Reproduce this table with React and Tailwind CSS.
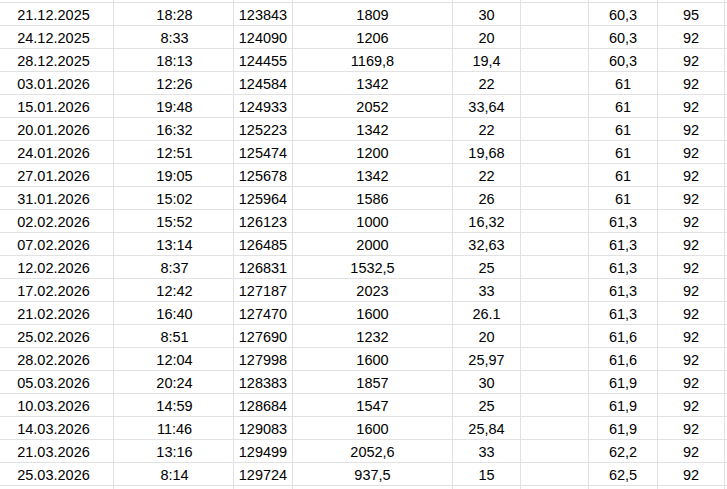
const rows = [
  ['21.12.2025', '18:28', '123843', '1809', '30', '', '60,3', '95'],
  ['24.12.2025', '8:33', '124090', '1206', '20', '', '60,3', '92'],
  ['28.12.2025', '18:13', '124455', '1169,8', '19,4', '', '60,3', '92'],
  ['03.01.2026', '12:26', '124584', '1342', '22', '', '61', '92'],
  ['15.01.2026', '19:48', '124933', '2052', '33,64', '', '61', '92'],
  ['20.01.2026', '16:32', '125223', '1342', '22', '', '61', '92'],
  ['24.01.2026', '12:51', '125474', '1200', '19,68', '', '61', '92'],
  ['27.01.2026', '19:05', '125678', '1342', '22', '', '61', '92'],
  ['31.01.2026', '15:02', '125964', '1586', '26', '', '61', '92'],
  ['02.02.2026', '15:52', '126123', '1000', '16,32', '', '61,3', '92'],
  ['07.02.2026', '13:14', '126485', '2000', '32,63', '', '61,3', '92'],
  ['12.02.2026', '8:37', '126831', '1532,5', '25', '', '61,3', '92'],
  ['17.02.2026', '12:42', '127187', '2023', '33', '', '61,3', '92'],
  ['21.02.2026', '16:40', '127470', '1600', '26.1', '', '61,3', '92'],
  ['25.02.2026', '8:51', '127690', '1232', '20', '', '61,6', '92'],
  ['28.02.2026', '12:04', '127998', '1600', '25,97', '', '61,6', '92'],
  ['05.03.2026', '20:24', '128383', '1857', '30', '', '61,9', '92'],
  ['10.03.2026', '14:59', '128684', '1547', '25', '', '61,9', '92'],
  ['14.03.2026', '11:46', '129083', '1600', '25,84', '', '61,9', '92'],
  ['21.03.2026', '13:16', '129499', '2052,6', '33', '', '62,2', '92'],
  ['25.03.2026', '8:14', '129724', '937,5', '15', '', '62,5', '92'],
];

// column widths incl. right grid line
const cols = [
  'w-[114px] pr-[6px]',
  'w-[120px] pl-[2px]',
  'w-[59px]',
  'w-[160px]',
  'w-[68px]',
  'w-[68px]',
  'w-[69px]',
  'w-[67px]',
];

const Row = ({ cells, className }) => (
  <div className={`flex border-b border-[#e2e2e2] ${className}`}>
    {cols.map((w, i) => (
      <div
        key={i}
        className={`${w} shrink-0 border-r border-[#e2e2e2] text-center pt-[3px] leading-[18px] overflow-hidden whitespace-nowrap`}
      >
        {cells ? cells[i] : ''}
      </div>
    ))}
    <div className="flex-1" />
  </div>
);

export default function App() {
  return (
    <div
      className="w-[727px] h-[489px] overflow-hidden bg-white text-black text-[14.5px]"
      style={{ fontFamily: '"Liberation Sans", Arial, sans-serif' }}
    >
      {/* partial row above */}
      <Row className="h-[3px]" />

      {rows.map((r, i) => (
        <Row key={i} cells={r} className="h-[23px]" />
      ))}

      {/* partial row below */}
      <Row className="h-[23px]" />
    </div>
  );
}
